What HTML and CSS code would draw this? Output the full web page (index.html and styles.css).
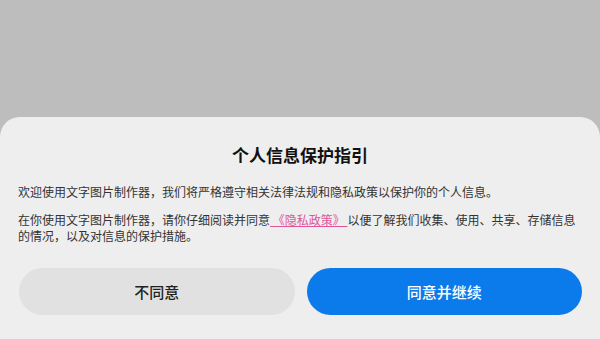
FILE: index.html
```html
<!DOCTYPE html>
<html lang="zh-CN">
<head>
<meta charset="utf-8">
<link rel="stylesheet" href="styles.css">
</head>
<body>
<div class="screen">
  <div class="backdrop"></div>
  <div class="sheet">
    <h1 class="title">个人信息保护指引</h1>
    <p class="para first">欢迎使用文字图片制作器，我们将严格遵守相关法律法规和隐私政策以保护你的个人信息。</p>
    <p class="para second">在你使用文字图片制作器，请你仔细阅读并同意<a class="link">&nbsp;《隐私政策》&nbsp;</a>以便了解我们收集、使用、共享、存储信息的情况，以及对信息的保护措施。</p>
    <div class="actions">
      <button class="btn decline">不同意</button>
      <button class="btn accept">同意并继续</button>
    </div>
  </div>
</div>
</body>
</html>
```

FILE: styles.css
```css
* { box-sizing: border-box; }
html, body {
  margin: 0;
  padding: 0;
  width: 600px;
  height: 339px;
  overflow: hidden;
  font-family: "Noto Sans CJK SC", "Noto Sans", sans-serif;
}
.screen {
  display: flex;
  flex-direction: column;
  height: 339px;
  background: #bdbdbd;
}
.backdrop {
  height: 117px;
  flex: none;
}
.sheet {
  flex: 1;
  background: #eeeeee;
  border-radius: 20px 20px 0 0;
  padding: 26px 18px 0 18px;
}
.title {
  margin: 0;
  text-align: center;
  font-size: 17px;
  line-height: 24px;
  font-weight: 700;
  color: #111;
}
.para {
  margin: 0;
  font-size: 12px;
  line-height: 16px;
  color: #333;
}
.para.first { margin-top: 17px; }
.para.second { margin-top: 12px; }
.link {
  color: #e0559a;
  text-decoration: underline;
}
.actions {
  display: flex;
  gap: 12px;
  margin-top: 24px;
  padding-left: 1px;
}
.btn {
  flex: 1;
  height: 47px;
  border: none;
  border-radius: 24px;
  font-family: inherit;
  font-size: 15px;
  font-weight: 500;
  padding: 0;
}
.decline {
  background: #e1e1e1;
  color: #222;
}
.accept {
  background: #0b7aea;
  color: #fff;
}
```
